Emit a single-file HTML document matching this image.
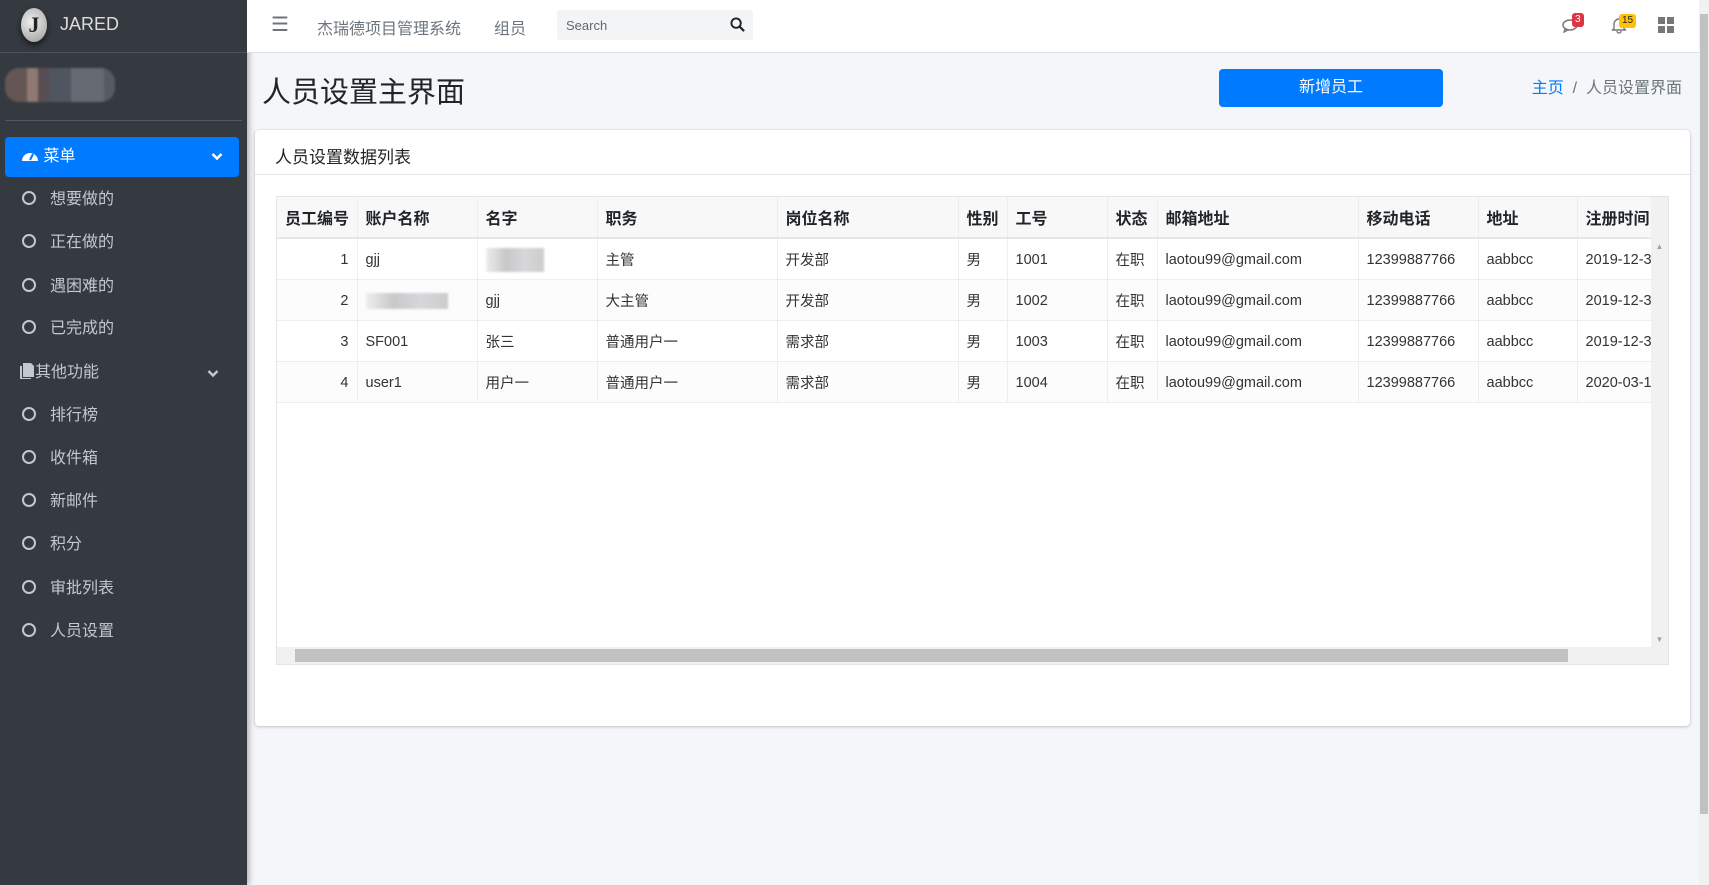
<!DOCTYPE html>
<html><head><meta charset="utf-8"><style>
*{box-sizing:border-box;margin:0;padding:0}
body{width:1709px;height:885px;overflow:hidden;background:#f4f6f9;font-family:"Liberation Sans","Noto Sans CJK SC",sans-serif;color:#212529;position:relative}
.sb{position:absolute;left:0;top:0;width:247px;height:885px;background:#343a40;box-shadow:2px 0 6px rgba(0,0,0,.3)}
.brand{height:53px;border-bottom:1px solid #4b545c;position:relative}
.logo{position:absolute;left:21px;top:8px;width:26px;height:34px;border-radius:50%;background:radial-gradient(circle at 40% 40%,#eee,#999);box-shadow:0 3px 6px rgba(0,0,0,.6);color:#222;font:bold 22px "Liberation Serif",serif;text-align:center;line-height:34px}
.brand span{position:absolute;left:60px;top:14px;color:#ddd;font-size:18px}
.user{position:absolute;left:5px;top:68px;width:110px;height:34px;border-radius:14px;background:linear-gradient(90deg,#6a5a58 0 20%,#9a8078 20% 30%,#5d5055 30% 40%,#535a63 40% 60%,#6b7079 60% 90%,#5a5f66 90%);filter:blur(1px);opacity:.9}
.sep{position:absolute;left:5px;right:5px;top:120px;border-top:1px solid #4f5962}
.act{position:absolute;left:5px;top:137px;width:234px;height:40px;background:#007bff;border-radius:4px;color:#fff;font-size:16px;line-height:40px;padding-left:16px}
.chev{position:absolute;right:16px;top:15px}
.it{position:absolute;left:22px;color:#c2c7d0;font-size:16px;height:24px;line-height:24px}
.it i{display:inline-block;width:14px;height:14px;border:2px solid #c2c7d0;border-radius:50%;vertical-align:-1px;margin-right:14px}
.grp{position:absolute;left:20px;width:219px;color:#c2c7d0;font-size:16px;line-height:24px}
.top{position:absolute;left:247px;top:0;right:10px;height:53px;background:#fff;border-bottom:1px solid #dee2e6}
.top .t{position:absolute;top:15px;color:#6c757d;font-size:16px}
.srch{position:absolute;left:310px;top:10px;width:196px;height:30px;background:#f2f4f6;border-radius:3px;font-size:13px;color:#666;padding:8px 9px}
.vs{position:absolute;right:0;top:0;width:10px;height:885px;background:#f1f1f1}
.vs div{position:absolute;left:1px;top:14px;width:8px;height:800px;background:#c1c1c1}
h1{position:absolute;left:262px;top:69px;font-size:29px;font-weight:400;color:#212529}
.btn{position:absolute;left:1219px;top:69px;width:224px;height:38px;background:#007bff;border-radius:4px;color:#fff;text-align:center;line-height:38px;font-size:16px}
.bc{position:absolute;right:27px;top:74px;font-size:16px;color:#6c757d}
.bc a{color:#007bff}
.card{position:absolute;left:255px;top:130px;width:1435px;height:596px;background:#fff;border-radius:4px;box-shadow:0 0 1px rgba(0,0,0,.2),0 1px 3px rgba(0,0,0,.2)}
.ch1{height:45px;border-bottom:1px solid #e5e5e5;padding:13px 20px;font-size:17px}
.tw{position:absolute;left:21px;top:66px;width:1393px;height:469px;border:1px solid #e5e5e5;overflow:hidden}
table{border-collapse:collapse;font-size:14.5px;position:absolute;left:0;top:0;table-layout:fixed}
th,td{border-right:1px solid #eee;border-bottom:1px solid #eee;padding:0 8px;text-align:left;white-space:nowrap;overflow:hidden}
th{height:41px;background:#f8f8f8;font-weight:bold;font-size:16px;border-bottom:2px solid #e5e5e5}
td{height:41px;color:#333;padding-top:2px}
tr:nth-child(odd) td{background:#fcfcfc}
.blur{display:inline-block;height:24px;background:linear-gradient(90deg,#eee,#c8c8ca,#d6d7da,#ccc);filter:blur(1px)}
.vbar{position:absolute;right:0;top:0;width:17px;height:451px;background:#f1f1f1;color:#a3a3a3;font-size:8px;text-align:center}
.hbar{position:absolute;left:0;bottom:0;width:1393px;height:17px;background:#f1f1f1}
.hbar div{position:absolute;left:18px;top:2px;width:1273px;height:13px;background:#c1c1c1}
.badge{position:absolute;font-size:10px;border-radius:3px;padding:0 3px;line-height:14px}
</style></head><body>
<div class="sb">
<div class="brand"><div class="logo">J</div><span>JARED</span></div>
<div class="user"></div><div class="sep"></div>
<div class="act"><svg width="18" height="14" viewBox="0 0 18 14" style="vertical-align:-1px"><path d="M1 13A8 8 0 1 1 17 13Z" fill="#fff"/><path d="M9 12L12 6" stroke="#007bff" stroke-width="2"/></svg> 菜单<svg class="chev" width="12" height="9" viewBox="0 0 12 9"><path d="M1.5 2l4.5 4.5L10.5 2" fill="none" stroke="#fff" stroke-width="2.5"/></svg></div>
<div class="it" style="top:188px"><i></i>想要做的</div>
<div class="it" style="top:231px"><i></i>正在做的</div>
<div class="it" style="top:275px"><i></i>遇困难的</div>
<div class="it" style="top:317px"><i></i>已完成的</div>
<div class="grp" style="top:361px"><svg width="15" height="16" viewBox="0 0 15 16" style="vertical-align:-2px"><path d="M3 0h8l3 3v11H3z" fill="#c2c7d0"/><path d="M0 3h2v12h9v1H0z" fill="#c2c7d0"/></svg>其他功能<svg class="chev" style="top:8px;right:20px" width="12" height="9" viewBox="0 0 12 9"><path d="M1.5 2l4.5 4.5L10.5 2" fill="none" stroke="#c2c7d0" stroke-width="2.5"/></svg></div>
<div class="it" style="top:404px"><i></i>排行榜</div>
<div class="it" style="top:447px"><i></i>收件箱</div>
<div class="it" style="top:490px"><i></i>新邮件</div>
<div class="it" style="top:533px"><i></i>积分</div>
<div class="it" style="top:577px"><i></i>审批列表</div>
<div class="it" style="top:620px"><i></i>人员设置</div>
</div>
<div class="top">
<div class="t" style="left:24px;font-size:20px;top:12px">&#9776;</div>
<div class="t" style="left:70px">杰瑞德项目管理系统</div>
<div class="t" style="left:247px">组员</div>
<div class="srch">Search<svg style="position:absolute;right:8px;top:7px" width="15" height="15" viewBox="0 0 16 16"><circle cx="6.5" cy="6.5" r="5" fill="none" stroke="#222" stroke-width="2"/><path d="M10 10l5 5" stroke="#222" stroke-width="2.4"/></svg></div>
<svg style="position:absolute;left:1315px;top:18px" width="18" height="16" viewBox="0 0 18 16"><ellipse cx="8" cy="7" rx="7" ry="5" fill="none" stroke="#777" stroke-width="1.5"/><path d="M3 11l-1 3 4-2" fill="none" stroke="#777" stroke-width="1.3"/></svg>
<span class="badge" style="left:1325px;top:13px;background:#dc3545;color:#fff">3</span>
<svg style="position:absolute;left:1364px;top:16px" width="16" height="18" viewBox="0 0 16 18"><path d="M3 13V8a5 5 0 0 1 10 0v5l2 1H1z M6 15a2 2 0 0 0 4 0" fill="none" stroke="#777" stroke-width="1.4"/></svg>
<span class="badge" style="left:1372px;top:14px;background:#ffc107;color:#222">15</span>
<svg style="position:absolute;left:1411px;top:17px" width="16" height="16"><rect x="0" y="0" width="7" height="7" fill="#777"/><rect x="9" y="0" width="7" height="7" fill="#777"/><rect x="0" y="9" width="7" height="7" fill="#777"/><rect x="9" y="9" width="7" height="7" fill="#777"/></svg>
</div>
<div class="vs"><div></div></div>
<h1>人员设置主界面</h1>
<div class="btn">新增员工</div>
<div class="bc"><a>主页</a> &nbsp;/&nbsp; 人员设置界面</div>
<div class="card">
<div class="ch1">人员设置数据列表</div>
<div class="tw">
<table style="width:1400px">
<colgroup><col style="width:80px"><col style="width:120px"><col style="width:120px"><col style="width:180px"><col style="width:181px"><col style="width:49px"><col style="width:100px"><col style="width:50px"><col style="width:201px"><col style="width:120px"><col style="width:99px"><col style="width:100px"></colgroup>
<tr><th>员工编号</th><th>账户名称</th><th>名字</th><th>职务</th><th>岗位名称</th><th>性别</th><th>工号</th><th>状态</th><th>邮箱地址</th><th>移动电话</th><th>地址</th><th>注册时间</th></tr>
<tr><td style="text-align:right">1</td><td>gjj</td><td><span class="blur" style="width:58px;vertical-align:middle"></span></td><td>主管</td><td>开发部</td><td>男</td><td>1001</td><td>在职</td><td>laotou99@gmail.com</td><td>12399887766</td><td>aabbcc</td><td>2019-12-30</td></tr>
<tr><td style="text-align:right">2</td><td><span class="blur" style="width:82px;height:16px;vertical-align:middle"></span></td><td>gjj</td><td>大主管</td><td>开发部</td><td>男</td><td>1002</td><td>在职</td><td>laotou99@gmail.com</td><td>12399887766</td><td>aabbcc</td><td>2019-12-30</td></tr>
<tr><td style="text-align:right">3</td><td>SF001</td><td>张三</td><td>普通用户一</td><td>需求部</td><td>男</td><td>1003</td><td>在职</td><td>laotou99@gmail.com</td><td>12399887766</td><td>aabbcc</td><td>2019-12-30</td></tr>
<tr><td style="text-align:right">4</td><td>user1</td><td>用户一</td><td>普通用户一</td><td>需求部</td><td>男</td><td>1004</td><td>在职</td><td>laotou99@gmail.com</td><td>12399887766</td><td>aabbcc</td><td>2020-03-15</td></tr>
</table>
<div class="vbar"><div style="margin-top:45px">&#9650;</div><div style="position:absolute;bottom:4px;width:17px">&#9660;</div></div>
<div class="hbar"><div></div></div>
</div>
</div>
</body></html>
